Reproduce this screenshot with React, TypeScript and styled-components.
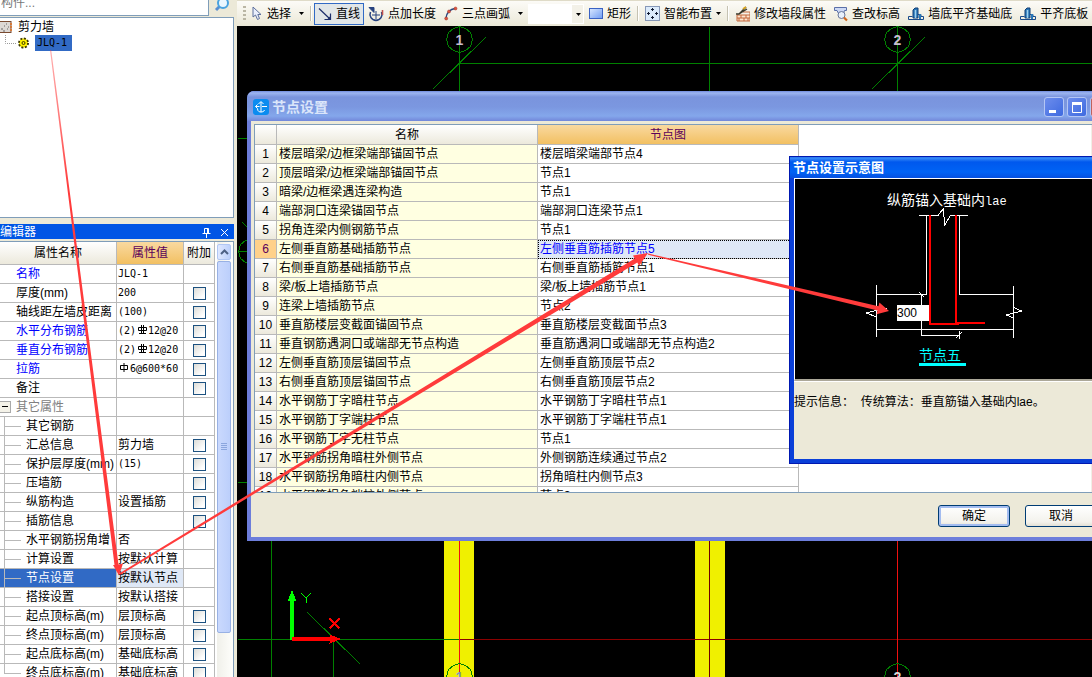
import React from "react";
import styled, { createGlobalStyle, css } from "styled-components";

const GlobalStyle = createGlobalStyle`
  * { box-sizing: border-box; }
  body {
    margin: 0;
    overflow: hidden;
    background: #ece9d8;
    font: 12px/18px "Liberation Sans", "Noto Sans CJK SC", sans-serif;
    color: #000;
  }
  button, input { font: inherit; color: inherit; margin: 0; }
`;

const mono = `"DejaVu Sans Mono", "Noto Sans CJK SC", monospace`;

const Page = styled.div`
  position: relative;
  display: flex;
  height: 100vh;
  overflow: hidden;
`;

/* ---------- left side ---------- */

const Sidebar = styled.aside`
  flex: 0 0 237px;
  display: flex;
  flex-direction: column;
  padding-right: 3px;
  min-height: 0;
  overflow: hidden;
`;

const SearchBar = styled.div`
  flex: 0 0 16px;
  display: flex;
  align-items: flex-end;
  overflow: hidden;
`;

const SearchInput = styled.input`
  width: 209px;
  height: 24px;
  padding: 0 0 2px 1px;
  border: 1px solid #7f9db9;
  border-left: 0;
  background: #fff;
  &::placeholder { color: #777; opacity: 1; }
`;

const SearchButton = styled.button`
  width: 24px;
  height: 18px;
  padding: 0;
  border: 0;
  background: none;
`;

const TreePanel = styled.div`
  flex: 0 0 201px;
  margin-top: 1px;
  border: 1px solid #7f9db9;
  border-left: 0;
  background: #fff;
  padding-top: 1px;
`;

const TreeRow = styled.div<{ $child?: boolean }>`
  display: flex;
  align-items: center;
  height: 16px;
  gap: ${(p) => (p.$child ? 4 : 6)}px;
`;

const TreeLabel = styled.span<{ $selected?: boolean }>`
  line-height: 16px;
  ${(p) => p.$selected && css`
    background: #316ac5;
    padding: 0 2px;
    width: 37px;
    font: 10px/16px ${mono};
  `}
`;

const EditorTitle = styled.div`
  flex: 0 0 15px;
  margin-top: 6px;
  display: flex;
  align-items: center;
  justify-content: space-between;
  background: #0055e5;
  color: #fff;
  line-height: 14px;
  padding: 1px 4px 0 0;
`;

const TitleIcons = styled.span`
  display: flex;
  gap: 7px;
`;

const GlyphButton = styled.button`
  display: block;
  width: 11px;
  height: 11px;
  padding: 0;
  border: 0;
  background: none;
  svg { display: block; }
`;

const EditorBody = styled.div`
  flex: 1 1 0;
  min-height: 0;
  margin-top: 2px;
  display: flex;
  border-top: 1px solid #7f9db9;
  border-right: 1px solid #7f9db9;
  background: #fff;
  overflow: hidden;
`;

const PropTable = styled.table`
  flex: 0 0 215px;
  width: 215px;
  table-layout: fixed;
  border-spacing: 0;
  align-self: flex-start;
`;

const headCell = css`
  padding: 0;
  font-weight: normal;
  text-align: center;
  border-right: 1px solid #b9b9b9;
  border-bottom: 1px solid #b9b9b9;
`;

const HeadCell = styled.th<{ $active?: boolean; $tall?: boolean }>`
  ${headCell}
  height: ${(p) => (p.$tall ? 23 : 20)}px;
  color: ${(p) => (p.$active ? "#5a005a" : "#000")};
  background: ${(p) => (p.$active ? "linear-gradient(#f9d9a0, #f2c062)" : "linear-gradient(#fff, #ece9dc)")};
`;

const PropCell = styled.td<{ $bg?: string; $color?: string; $code?: boolean }>`
  height: 19px;
  padding: 0 0 0 1px;
  border-right: 1px solid #b9b9b9;
  border-bottom: 1px solid #b9b9b9;
  background: ${(p) => p.$bg || "#fff"};
  color: ${(p) => p.$color || "#000"};
  line-height: 18px;
  white-space: nowrap;
  overflow: hidden;
  ${(p) => p.$code && css`font: 10px/18px ${mono};`}
`;

const NameFlex = styled.div<{ $indent: number }>`
  display: flex;
  height: 18px;
  margin-left: -1px;
  padding-left: ${(p) => p.$indent}px;
  overflow: hidden;
`;

const Branch = styled.span<{ $last?: boolean }>`
  flex: 0 0 26px;
  height: 18px;
  background:
    linear-gradient(#b9b9b9, #b9b9b9) 4px 9px / 17px 1px no-repeat,
    linear-gradient(#b9b9b9, #b9b9b9) 4px 0 / 1px ${(p) => (p.$last ? "9px" : "18px")} no-repeat;
`;

const Toggle = styled.button`
  flex: 0 0 11px;
  width: 11px;
  height: 12px;
  margin: 3px 5px 0 0;
  padding: 0;
  border: 1px solid #aaa;
  border-left: 0;
  background: linear-gradient(#000, #000) 2px 4px / 6px 1px no-repeat #f4f2e8;
`;

const Check = styled.input`
  appearance: none;
  display: block;
  width: 13px;
  height: 13px;
  margin: 0 0 0 8px;
  border: 1px solid #1c5180;
  background: linear-gradient(135deg, #dcdcd7, #fff 80%);
`;

const Bar = styled.path`
  stroke: #000;
  fill: none;
`;

const Scroll = styled.div`
  flex: 0 0 16px;
  margin-left: 2px;
  display: flex;
  flex-direction: column;
  gap: 1px;
  padding-top: 2px;
  background: linear-gradient(90deg, #f0f0ea, #fefefb);
`;

const ScrollButton = styled.button`
  flex: 0 0 16px;
  width: 14px;
  padding: 0;
  border: 1px solid #b0c6f4;
  border-radius: 2px;
  background: linear-gradient(90deg, #dfe8ff, #bcd0fb);
  svg { display: block; margin: auto; }
`;

const Thumb = styled.div`
  flex: 0 0 372px;
  width: 14px;
  display: flex;
  align-items: center;
  justify-content: center;
  border: 1px solid #98b1e4;
  border-radius: 2px;
  background: linear-gradient(90deg, #cad9fd, #bccffb);
`;

/* ---------- workspace ---------- */

const Workspace = styled.main`
  flex: 1 1 0;
  min-width: 0;
  display: flex;
  flex-direction: column;
`;

const Toolbar = styled.div`
  flex: 0 0 26px;
  display: flex;
  align-items: center;
  padding: 0 0 0 6px;
  overflow: hidden;
  white-space: nowrap;
  border-top: 1px solid #dfdbc8;
  background: linear-gradient(#fcfbf7, #ebe8d7);
`;

const Grip = styled.span`
  flex: 0 0 3px;
  height: 16px;
  margin-right: 1px;
  background: repeating-linear-gradient(#bab6a4 0 2px, transparent 2px 4px);
`;

const ToolButton = styled.button<{ $on?: boolean }>`
  flex: none;
  display: flex;
  align-items: center;
  gap: 4px;
  height: 22px;
  padding: 0 3px;
  border: 1px solid ${(p) => (p.$on ? "#316ac5" : "transparent")};
  background: ${(p) => (p.$on ? "#e1e6e8" : "none")};
  svg { display: block; flex: none; }
`;

const Sep = styled.span`
  flex: 0 0 2px;
  height: 15px;
  margin: 0 2px;
  background: linear-gradient(90deg, #c5c2b2 50%, #fff 50%);
`;

const Combo = styled.select`
  flex: 0 0 56px;
  height: 20px;
  margin: 0 1px;
  border: 1px solid #fff;
  border-radius: 0;
  appearance: none;
  background:
    url("data:image/svg+xml,%3Csvg xmlns='http://www.w3.org/2000/svg' width='5' height='3'%3E%3Cpath d='M0 0h5L2.5 3z'/%3E%3C/svg%3E") 47px 8px no-repeat,
    linear-gradient(90deg, #fff 43px, #f3f1e8 43px);
`;

const Canvas = styled.div`
  position: relative;
  flex: 1 1 0;
  background: #000;
  overflow: hidden;
`;

const Drawing = styled.svg`
  position: absolute;
  inset: 0;
  width: 100%;
  height: 100%;
  shape-rendering: crispEdges;
`;

const Dialog = styled.section`
  position: absolute;
  top: 65px;
  left: 10px;
  right: -26px;
  border: 4px solid #6d7edb;
  border-top: 0;
  border-radius: 7px 7px 0 0;
  background: #ece9d8;
`;

const DialogTitle = styled.header`
  display: flex;
  align-items: center;
  height: 30px;
  margin: 0 -4px;
  padding: 2px 8px 0 6px;
  gap: 3px;
  border-radius: 7px 7px 0 0;
  background: linear-gradient(#6f8add 0, #9db5f0 2px, #7a94dd 6px, #7b97e0 16px, #84a7eb 25px, #7287da 30px);
`;

const DialogName = styled.h2`
  flex: 1;
  margin: 0;
  font-size: 14px;
  line-height: 20px;
  font-weight: bold;
  color: #dbe6fa;
`;

const WinButton = styled.button<{ $close?: boolean }>`
  width: 20px;
  height: 20px;
  padding: 0;
  border: 1px solid #b4c6f5;
  border-radius: 3px;
  background: ${(p) => (p.$close ? "#c0625c" : "linear-gradient(135deg, #6d8dec, #3e6ae0)")};
  svg { display: block; }
`;

const GridBox = styled.div`
  height: 369px;
  margin: 3px 5px 0 3px;
  display: flex;
  justify-content: space-between;
  align-items: stretch;
  border: 1px solid #7f9db9;
  background: #fff;
  overflow: hidden;
`;

const NodeTable = styled.table`
  width: 544px;
  table-layout: fixed;
  border-spacing: 0;
  align-self: flex-start;
`;

const NumCell = styled.th<{ $active?: boolean }>`
  ${headCell}
  height: 19px;
  line-height: 18px;
  color: ${(p) => (p.$active ? "#5a005a" : "#000")};
  background: ${(p) => (p.$active ? "#ffd18a" : "linear-gradient(#fff, #ece9dc)")};
`;

const NodeCell = styled.td<{ $name?: boolean; $active?: boolean }>`
  height: 19px;
  padding: 0 0 0 2px;
  line-height: 18px;
  white-space: nowrap;
  border-right: 1px solid #b9b9b9;
  border-bottom: 1px solid #b9b9b9;
  background: ${(p) => (p.$name ? "#ffffe1" : p.$active ? "#dfe8f6" : "#fff")};
  color: ${(p) => (p.$active ? "#00f" : "#000")};
  outline: ${(p) => (p.$active ? "1px dotted #000" : "none")};
  outline-offset: -1px;
`;

const GridScroll = styled.div`
  flex: 0 0 17px;
  background: #f1efe6;
`;

const DialogActions = styled.footer`
  display: flex;
  justify-content: flex-end;
  gap: 15px;
  padding: 12px 17px 10px;
`;

const ActionButton = styled.button<{ $default?: boolean }>`
  width: 72px;
  height: 22px;
  padding: 0;
  border: 1px solid #003c74;
  border-radius: 3px;
  background: linear-gradient(#fff, #f3f2ec 80%, #e3e0d4);
  box-shadow: ${(p) => (p.$default ? "inset 0 0 0 2px #a3bcf0" : "none")};
`;

const Popup = styled.section`
  position: absolute;
  top: 130px;
  left: 552px;
  right: -40px;
  border: 5px solid #0a3fd8;
  border-top: 0;
  outline: 1px solid #0018b0;
  outline-offset: -1px;
  background: #ece9d8;
`;

const PopupTitle = styled.h3`
  margin: 0 -5px;
  height: 22px;
  padding: 2px 0 0 4px;
  font-size: 13px;
  line-height: 20px;
  font-weight: bold;
  color: #fff;
  background: linear-gradient(#0a52d8 0, #3a8cf8 2px, #0058ee 6px, #0063f5 16px, #0550e0 22px);
`;

const Sketch = styled.div`
  position: relative;
  height: 203px;
  border-top: 1px solid #fff;
  border-left: 1px solid #fff;
  border-bottom: 2px solid #aca899;
  background: #000;
`;

const DimInput = styled.input`
  position: absolute;
  left: 102px;
  top: 126px;
  width: 32px;
  height: 16px;
  padding: 0;
  border: 0;
  background: #fff;
  line-height: 16px;
`;

const Hint = styled.p`
  margin: 0;
  height: 78px;
  padding-top: 11px;
  border-top: 1px solid #fff;
  white-space: pre;
`;

const Annotations = styled.svg`
  position: absolute;
  inset: 0;
  width: 100%;
  height: 100%;
  pointer-events: none;
`;

/* ---------- data ---------- */

type Prop = {
  name: string;
  value?: React.ReactNode;
  check?: boolean;
  blue?: boolean;
  code?: boolean;
  kind?: "top" | "group" | "child";
  selected?: boolean;
};

const Rebar = ({ plain }: { plain?: boolean }) => (
  <svg width="12" height="9" viewBox="0 0 12 9" aria-label="Φ">
    <Bar d={plain ? "M2.500 2.500h7v4h-7zM6 0v9" : "M2.500 2.500h8v3h-8zM5.500 0v8M7.500 0v8M3 8.500h7"} />
  </svg>
);

const props: Prop[] = [
  { name: "名称", value: "JLQ-1", blue: true, code: true },
  { name: "厚度(mm)", value: "200", check: true, code: true },
  { name: "轴线距左墙皮距离", value: "(100)", check: true, code: true },
  { name: "水平分布钢筋", value: <>(2)<Rebar />12@20</>, check: true, blue: true, code: true },
  { name: "垂直分布钢筋", value: <>(2)<Rebar />12@20</>, check: true, blue: true, code: true },
  { name: "拉筋", value: <><Rebar plain />6@600*60</>, check: true, blue: true, code: true },
  { name: "备注", check: true },
  { name: "其它属性", kind: "group" },
  { name: "其它钢筋", kind: "child" },
  { name: "汇总信息", value: "剪力墙", check: true, kind: "child" },
  { name: "保护层厚度(mm)", value: "(15)", check: true, kind: "child", code: true },
  { name: "压墙筋", check: true, kind: "child" },
  { name: "纵筋构造", value: "设置插筋", check: true, kind: "child" },
  { name: "插筋信息", check: true, kind: "child" },
  { name: "水平钢筋拐角增", value: "否", kind: "child" },
  { name: "计算设置", value: "按默认计算", kind: "child" },
  { name: "节点设置", value: "按默认节点", kind: "child", selected: true },
  { name: "搭接设置", value: "按默认搭接", kind: "child" },
  { name: "起点顶标高(m)", value: "层顶标高", check: true, kind: "child" },
  { name: "终点顶标高(m)", value: "层顶标高", check: true, kind: "child" },
  { name: "起点底标高(m)", value: "基础底标高", check: true, kind: "child" },
  { name: "终点底标高(m)", value: "基础底标高", check: true, kind: "child" },
];

const nodes: [string, string][] = [
  ["楼层暗梁/边框梁端部锚固节点", "楼层暗梁端部节点4"],
  ["顶层暗梁/边框梁端部锚固节点", "节点1"],
  ["暗梁/边框梁遇连梁构造", "节点1"],
  ["端部洞口连梁锚固节点", "端部洞口连梁节点1"],
  ["拐角连梁内侧钢筋节点", "节点1"],
  ["左侧垂直筋基础插筋节点", "左侧垂直筋插筋节点5"],
  ["右侧垂直筋基础插筋节点", "右侧垂直筋插筋节点1"],
  ["梁/板上墙插筋节点", "梁/板上墙插筋节点1"],
  ["连梁上墙插筋节点", "节点2"],
  ["垂直筋楼层变截面锚固节点", "垂直筋楼层变截面节点3"],
  ["垂直钢筋遇洞口或端部无节点构造", "垂直筋遇洞口或端部无节点构造2"],
  ["左侧垂直筋顶层锚固节点", "左侧垂直筋顶层节点2"],
  ["右侧垂直筋顶层锚固节点", "右侧垂直筋顶层节点2"],
  ["水平钢筋丁字暗柱节点", "水平钢筋丁字暗柱节点1"],
  ["水平钢筋丁字端柱节点", "水平钢筋丁字端柱节点1"],
  ["水平钢筋丁字无柱节点", "节点1"],
  ["水平钢筋拐角暗柱外侧节点", "外侧钢筋连续通过节点2"],
  ["水平钢筋拐角暗柱内侧节点", "拐角暗柱内侧节点3"],
  ["水平钢筋拐角端柱外侧节点", "节点3"],
];

/* ---------- icons ---------- */

const Caret = ({ wide }: { wide?: boolean }) => (
  <svg width={wide ? 9 : 5} height="3" viewBox={wide ? "-4 0 9 3" : "0 0 5 3"}><path d="M0 0h5L2.5 3z" /></svg>
);

const CursorIcon = () => (
  <svg width="12" height="15" viewBox="0 0 12 15"><path d="M2 1v10l2.500-2L6.500 13.500l2-1L6.800 8.500H10z" fill="#e9eefc" stroke="#5d6f9c" /></svg>
);
const LineIcon = () => (
  <svg width="14" height="14" viewBox="0 0 14 14" fill="none" stroke="#1d2f6b" strokeWidth="1.200"><path d="M1 1.500l11 10.500M12.500 6.500v6H6.500" /><path d="M12.500 9v4h-4z" fill="#1d2f6b" stroke="none" /></svg>
);
const PointLenIcon = () => (
  <svg width="16" height="16" viewBox="0 0 16 16" fill="none"><path d="M2.500 6a6 6 0 1 0 11 0" stroke="#27427f" strokeWidth="1.600" /><path d="M1 1.500h5v5z" fill="#27427f" stroke="#27427f" /><path d="M8 5v8M4 9h8" stroke="#27427f" /><path d="M14.500 4v5" stroke="#c0504d" strokeWidth="1.600" /></svg>
);
const ArcIcon = () => (
  <svg width="14" height="15" viewBox="0 0 14 15" fill="none"><path d="M2 12C2.500 7 6 3 11 2.500" stroke="#2c477f" strokeWidth="1.400" /><g fill="#e05540" stroke="#9c2f24" strokeWidth="0.500"><circle cx="2.200" cy="12.500" r="1.500" /><circle cx="5" cy="5.500" r="1.500" /><circle cx="11.500" cy="2.500" r="1.500" /></g></svg>
);
const RectIcon = () => (
  <svg width="14" height="11" viewBox="0 0 14 11"><defs><linearGradient id="rc" x1="0" y1="0" x2="1" y2="1"><stop stopColor="#dbe9ff" /><stop offset="1" stopColor="#6f9cf2" /></linearGradient></defs><rect x="0.500" y="0.500" width="13" height="10" fill="url(#rc)" stroke="#3a62c4" /></svg>
);
const SmartIcon = () => (
  <svg width="15" height="15" viewBox="0 0 15 15"><rect x="0.500" y="0.500" width="14" height="14" fill="#dcebfb" stroke="#233f7a" strokeDasharray="1 1" /><path d="M7.500 2v3M6 3.500h3M7.500 10v3M6 11.500h3M2 7.500h3M3.500 6v3M10 7.500h3M11.500 6v3" stroke="#111a30" /></svg>
);
const WallEditIcon = () => (
  <svg width="15" height="16" viewBox="0 0 15 16"><path d="M2 9h13v6H2z" fill="#fbe4cd" stroke="#c4683c" /><path d="M2 12h13M6 9v3M11 9v3M4 12v3M9 12v3M13 12v3M8 6h7v3" stroke="#c4683c" fill="none" /><path d="M1 8h3l7-7M4 8l8-5" stroke="#3b3a2c" strokeWidth="1.400" fill="none" /><path d="M8 3l3-2" stroke="#d8a520" strokeWidth="2" /></svg>
);
const CheckLevelIcon = () => (
  <svg width="14" height="16" viewBox="0 0 14 16"><path d="M0.500 1.500h12v3h-2l-1 3h-5L3 4.500H0.500z" fill="#cdd9f5" stroke="#5a6fa8" /><circle cx="7.500" cy="9" r="3.500" fill="#e8f0fb" stroke="#66759a" /><path d="M10 11.500l3 3" stroke="#d0661c" strokeWidth="2.200" /></svg>
);
const AlignIcon = () => (
  <svg width="16" height="14" viewBox="0 0 16 14"><path d="M5 11V3l2-2h3v10z" fill="#2877b8" stroke="#123e75" /><path d="M7.500 3v8" stroke="#9fd0ee" strokeWidth="1.500" /><path d="M0.500 12.500v-3h4M10 7.500h3v2h2.500v3H0.500" fill="none" stroke="#194b8a" /><path d="M12 7v5" stroke="#2877b8" strokeWidth="2" /></svg>
);

const tools: { label: string; icon: React.ReactNode; on?: boolean; caret?: "wide" | "tight"; sep?: boolean; combo?: boolean }[] = [
  { label: "选择", icon: <CursorIcon />, caret: "wide", sep: true },
  { label: "直线", icon: <LineIcon />, on: true },
  { label: "点加长度", icon: <PointLenIcon /> },
  { label: "三点画弧", icon: <ArcIcon />, caret: "wide", combo: true },
  { label: "矩形", icon: <RectIcon />, sep: true },
  { label: "智能布置", icon: <SmartIcon />, caret: "tight", sep: true },
  { label: "修改墙段属性", icon: <WallEditIcon /> },
  { label: "查改标高", icon: <CheckLevelIcon /> },
  { label: "墙底平齐基础底", icon: <AlignIcon /> },
  { label: "平齐底板", icon: <AlignIcon /> },
];

const Bubble = ({ x, y, label, fill = "#c9bdd0" }: { x: number; y: number; label?: string; fill?: string }) => (
  <g transform={`translate(${x} ${y})`}>
    <polygon points="0,-13 6,-11 11,-7 13,0 11,7 6,11 0,13 -6,11 -11,7 -13,0 -11,-7 -6,-11" fill="none" stroke="#008000" />
    {label && <text y="5" textAnchor="middle" fontSize="14" fontWeight="bold" fill={fill} stroke="none">{label}</text>}
  </g>
);

const CadDrawing = () => (
  <Drawing>
    <g transform="translate(-236.500 -25.500)" fill="none" stroke="#008000">
      <path d="M459 26V91M459 63H3000M709 26V91M897 26V91M237 138h12M237 251h12M237 482h12M271 540V2000M333 639V2000M237 639H459" />
      <path d="M432 89L485 37M871 89L924 37M242 222l6 6M307 612L360 664" />
      <g stroke="none" fill="#f0f000"><path d="M443.500 539.500h30V2000h-30zM694.500 539.500h30V2000h-30z" /></g>
      <path d="M443 639h16" />
      <path d="M459 639H3000" stroke="#8b0000" />
      <path d="M459 540V2000M897 540V2000" stroke="#f01010" />
      <path d="M709 540V2000" stroke="#700000" />
      <Bubble x={459} y={39} label="1" />
      <Bubble x={897} y={39} label="2" />
      <Bubble x={251} y={251} />
      <g stroke="none"><rect x="289.500" y="599" width="4" height="40" fill="#0f0" /><path d="M291.500 589l4 11h-8z" fill="#0f0" /><rect x="291.500" y="636.500" width="38" height="4" fill="#f00" /><path d="M341 638.500l-12 4.500v-9z" fill="#f00" /></g>
      <path d="M301 593l4.500 4.500 4.500-4.500M305.500 597.500v5" stroke="#0f0" />
      <path d="M329 618l10 10M339 618l-10 10" stroke="#f00" strokeWidth="1.500" />
      <Bubble x={459} y={676} label="1" fill="#7f93b8" />
      <Bubble x={897} y={676} label="2" fill="#d8d8d8" />
    </g>
  </Drawing>
);

const SectionDrawing = () => (
  <Drawing>
    <g transform="translate(-795 -179)" fill="none" stroke="#fff">
      <path d="M919 215.500h19l5.500-7 1 17 6-10h17M926.500 215v79.500H876M959.500 215v79.500h54M876.500 285v52M1013.500 286v52M876 329.500h138M921.500 294v41.500h38M959.500 331v8M919 292l5 5M956 338l6-6" />
      <path d="M887 308l-21 5 11 4M1013.500 307.500l8 3.500-15 4 7 3" />
      <path d="M930 215v109h29M956 215v108h29" stroke="#f00" strokeWidth="2" />
      <path d="M919 364.500h47" stroke="#0ff" strokeWidth="3" />
      <g stroke="none" fontSize="14">
        <text x="887" y="205" fill="#fff">纵筋锚入基础内<tspan fontFamily="Liberation Mono" fontSize="12">lae</tspan></text>
        <text x="919" y="360" fill="#0ff">节点五</text>
      </g>
    </g>
  </Drawing>
);

export default function App() {
  return (
    <Page>
      <GlobalStyle />
      <Sidebar>
        <SearchBar>
          <SearchInput placeholder="构件..." aria-label="搜索构件" />
          <SearchButton aria-label="搜索">
            <svg width="24" height="18" viewBox="0 0 24 18" fill="none"><path d="M7 12l4-4" stroke="#5a8fd0" strokeWidth="3" /><circle cx="14" cy="5" r="5" fill="#eaf7ff" stroke="#4aa3e0" strokeWidth="2" /></svg>
          </SearchButton>
        </SearchBar>
        <TreePanel>
          <TreeRow>
            <svg width="12" height="14" viewBox="0 0 12 14"><rect x="-1" y="1.500" width="12" height="11" fill="#ddd8d4" stroke="#7a4a30" /><path d="M1 9h2M4 6h1M7 9h1M3 11h2M6 4h1M8 7h1" stroke="#666" /><path d="M10 4h2M10 7h2M10 10h2" stroke="#e07020" strokeWidth="1.500" /></svg>
            <TreeLabel>剪力墙</TreeLabel>
          </TreeRow>
          <TreeRow $child>
            <svg width="31" height="16" viewBox="0 0 31 16"><path d="M5.500 0v8.500H17" fill="none" stroke="#999" strokeDasharray="1 1" /><circle cx="23.500" cy="8" r="4.500" fill="#fff200" stroke="#3d3800" strokeWidth="2" strokeDasharray="2 1.500" /><circle cx="23.500" cy="8" r="3.500" fill="#fff200" /><circle cx="23.500" cy="8" r="1.500" fill="none" stroke="#3d3800" /></svg>
            <TreeLabel $selected>JLQ-1</TreeLabel>
          </TreeRow>
        </TreePanel>
        <EditorTitle>
          <span>编辑器</span>
          <TitleIcons>
            <GlyphButton aria-label="固定"><svg width="11" height="11" viewBox="0 0 11 11" fill="none" stroke="#fff"><path d="M3.500 6V1.500h4V6M6.500 2v4M1.500 6.500h8M5.500 7v4" /></svg></GlyphButton>
            <GlyphButton aria-label="关闭"><svg width="11" height="11" viewBox="0 0 11 11" stroke="#fff"><path d="M2 2l7 7M9 2L2 9" /></svg></GlyphButton>
          </TitleIcons>
        </EditorTitle>
        <EditorBody>
          <PropTable>
            <colgroup><col style={{ width: 117 }} /><col style={{ width: 67 }} /><col style={{ width: 31 }} /></colgroup>
            <thead>
              <tr><HeadCell $tall>属性名称</HeadCell><HeadCell $tall $active>属性值</HeadCell><HeadCell $tall>附加</HeadCell></tr>
            </thead>
            <tbody>
              {props.map((p, i) => (
                <tr key={p.name}>
                  <PropCell $bg={p.selected ? "#316ac5" : undefined} $color={p.selected ? "#fff" : p.blue ? "#00f" : p.kind === "group" ? "#808080" : undefined}>
                    <NameFlex $indent={p.kind ? 0 : 16}>
                      {p.kind === "group" && <Toggle aria-label="折叠" />}
                      {p.kind === "child" && <Branch $last={i === props.length - 1} />}
                      {p.name}
                    </NameFlex>
                  </PropCell>
                  <PropCell $code={p.code} $bg={p.selected ? "#dfe8f6" : undefined}>{p.value}</PropCell>
                  <PropCell>{p.check && <Check type="checkbox" aria-label={p.name} />}</PropCell>
                </tr>
              ))}
            </tbody>
          </PropTable>
          <Scroll>
            <ScrollButton aria-label="向上"><svg width="9" height="6" viewBox="0 0 9 6" fill="none" stroke="#4d6185" strokeWidth="2"><path d="M1 5l3.500-3.500L8 5" /></svg></ScrollButton>
            <Thumb><svg width="7" height="8" viewBox="0 0 7 8" stroke="#8ba6de"><path d="M0 .5h6M0 2.500h6M0 4.500h6M0 6.500h6" /></svg></Thumb>
          </Scroll>
        </EditorBody>
      </Sidebar>

      <Workspace>
        <Toolbar>
          <Grip />
          {tools.map((t) => (
            <React.Fragment key={t.label}>
              <ToolButton $on={t.on}>{t.icon}{t.label}{t.caret && <Caret wide={t.caret === "wide"} />}</ToolButton>
              {t.combo && <Combo aria-label="画弧方式"><option /></Combo>}
              {t.sep && <Sep />}
            </React.Fragment>
          ))}
        </Toolbar>
        <Canvas>
          <CadDrawing />
          <Dialog>
            <DialogTitle>
              <svg width="16" height="16" viewBox="0 0 16 16"><rect width="16" height="16" rx="3" fill="#0b8cf0" /><path d="M2.500 7.500h4M9 7.500h5M8 3v10M5.500 5L8 2.500 10.500 5M4.500 9.500c0 3 2 3.500 3.500 3.500s3-.5 3.500-2M4.500 5.500l-2 2 2 2" fill="none" stroke="#fff" /></svg>
              <DialogName>节点设置</DialogName>
              <WinButton aria-label="最小化"><svg width="18" height="18"><rect x="4" y="12" width="7" height="3" fill="#fff" /></svg></WinButton>
              <WinButton aria-label="最大化"><svg width="18" height="18"><path d="M4.500 5v9.500h9V5" fill="none" stroke="#fff" /><rect x="4" y="4" width="10" height="3" fill="#fff" /></svg></WinButton>
              <WinButton $close aria-label="关闭" />
            </DialogTitle>
            <GridBox>
              <NodeTable>
                <colgroup><col style={{ width: 22 }} /><col style={{ width: 261 }} /><col style={{ width: 261 }} /></colgroup>
                <thead><tr><HeadCell aria-label="序号" /><HeadCell>名称</HeadCell><HeadCell $active>节点图</HeadCell></tr></thead>
                <tbody>
                  {nodes.map(([name, node], i) => (
                    <tr key={name}>
                      <NumCell $active={i === 5}>{i + 1}</NumCell>
                      <NodeCell $name>{name}</NodeCell>
                      <NodeCell $active={i === 5}>{node}</NodeCell>
                    </tr>
                  ))}
                </tbody>
              </NodeTable>
              <GridScroll />
            </GridBox>
            <DialogActions>
              <ActionButton $default>确定</ActionButton>
              <ActionButton>取消</ActionButton>
            </DialogActions>
          </Dialog>
          <Popup>
            <PopupTitle>节点设置示意图</PopupTitle>
            <Sketch>
              <SectionDrawing />
              <DimInput defaultValue="300" aria-label="锚固长度" />
            </Sketch>
            <Hint>提示信息：  传统算法：垂直筋锚入基础内lae。</Hint>
          </Popup>
        </Canvas>
      </Workspace>

      <Annotations>
        <defs>
          <linearGradient id="fade" gradientUnits="userSpaceOnUse" x1="51" y1="50" x2="70" y2="190">
            <stop stopColor="#ff3b3b" stopOpacity="0.400" /><stop offset="1" stopColor="#ff3b3b" />
          </linearGradient>
        </defs>
        <path d="M50 50h1.200L118.500 564.500l4.500-1-4 12-6-10.500h1.500z" fill="url(#fade)" />
        <path d="M119.500 573.300L634.700 258.400 633 255.500 648 253 639 266 637.300 262.600 120.500 574.700z" fill="#ff3b3b" />
        <path d="M648 253.500L878.500 306.200 879.400 302.500 889 311 876.600 314.300 877.500 310.500 648 254.700z" fill="#ff3b3b" />
      </Annotations>
    </Page>
  );
}
